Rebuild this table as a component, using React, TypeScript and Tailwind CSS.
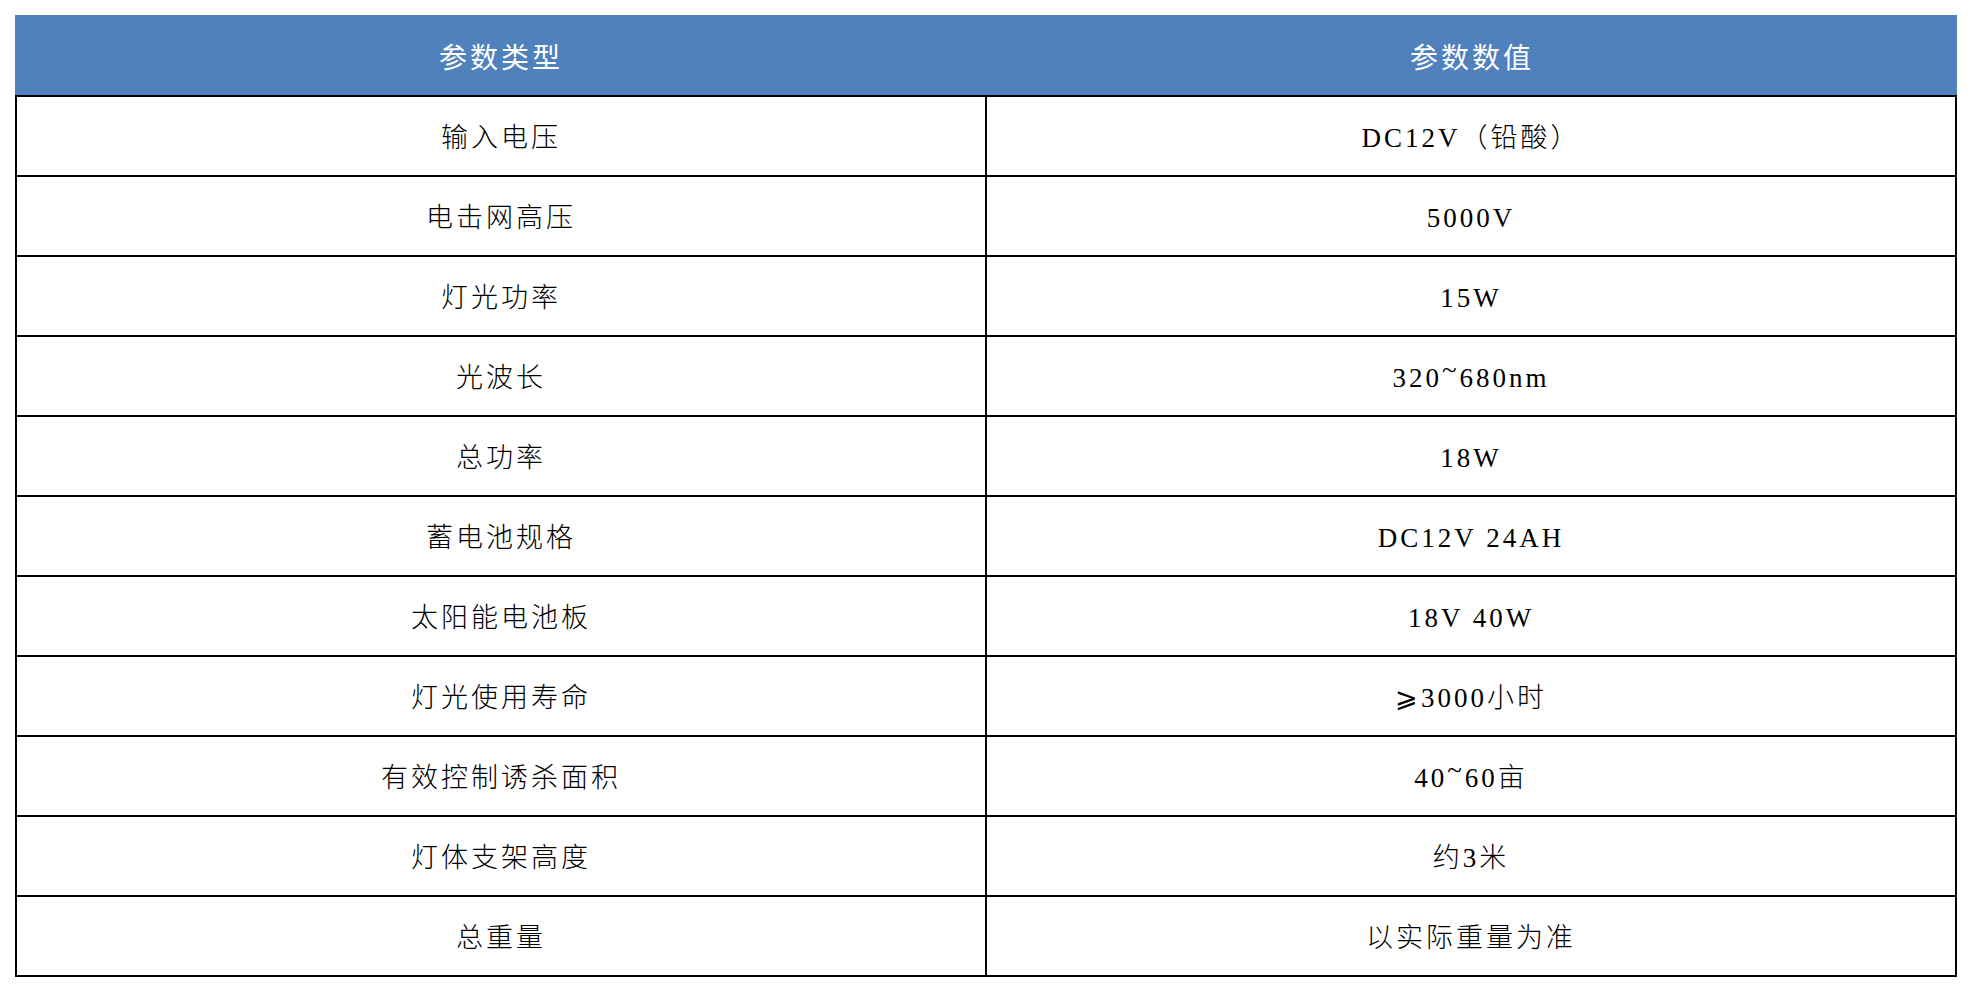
const rows: [string, React.ReactNode][] = [
  ["输入电压", "DC12V（铅酸）"],
  ["电击网高压", "5000V"],
  ["灯光功率", "15W"],
  ["光波长", <>320<span className="relative -top-[8px]">~</span>680nm</>],
  ["总功率", "18W"],
  ["蓄电池规格", "DC12V 24AH"],
  ["太阳能电池板", "18V 40W"],
  ["灯光使用寿命", <><span className="font-['DejaVu_Sans'] font-light">⩾</span>3000小时</>],
  ["有效控制诱杀面积", <>40<span className="relative -top-[8px]">~</span>60亩</>],
  ["灯体支架高度", "约3米"],
  ["总重量", "以实际重量为准"],
]

export default function App() {
  return (
    <div className="min-h-screen bg-white pt-[15px] pl-[15px] font-['Liberation_Serif','Noto_Sans_CJK_SC',serif] font-light text-[27px] tracking-[3px]">
      <div className="w-[1942px]">
        <div className="h-[80px] bg-[#4f81bd] text-white text-[28px] font-normal flex pt-[8px]">
          <div className="w-[972px] flex items-center justify-center">参数类型</div>
          <div className="flex-1 flex items-center justify-center">参数数值</div>
        </div>
        <div className="border-l-2 border-r-2 border-b-2 border-black text-black">
          {rows.map(([label, value], i) => (
            <div key={i} className="h-[80px] border-t-2 border-black flex">
              <div className="w-[970px] border-r-2 border-black flex items-center justify-center pt-[5px]">
                {label}
              </div>
              <div className="flex-1 flex items-center justify-center whitespace-pre pt-[5px]">{value}</div>
            </div>
          ))}
        </div>
      </div>
    </div>
  )
}
